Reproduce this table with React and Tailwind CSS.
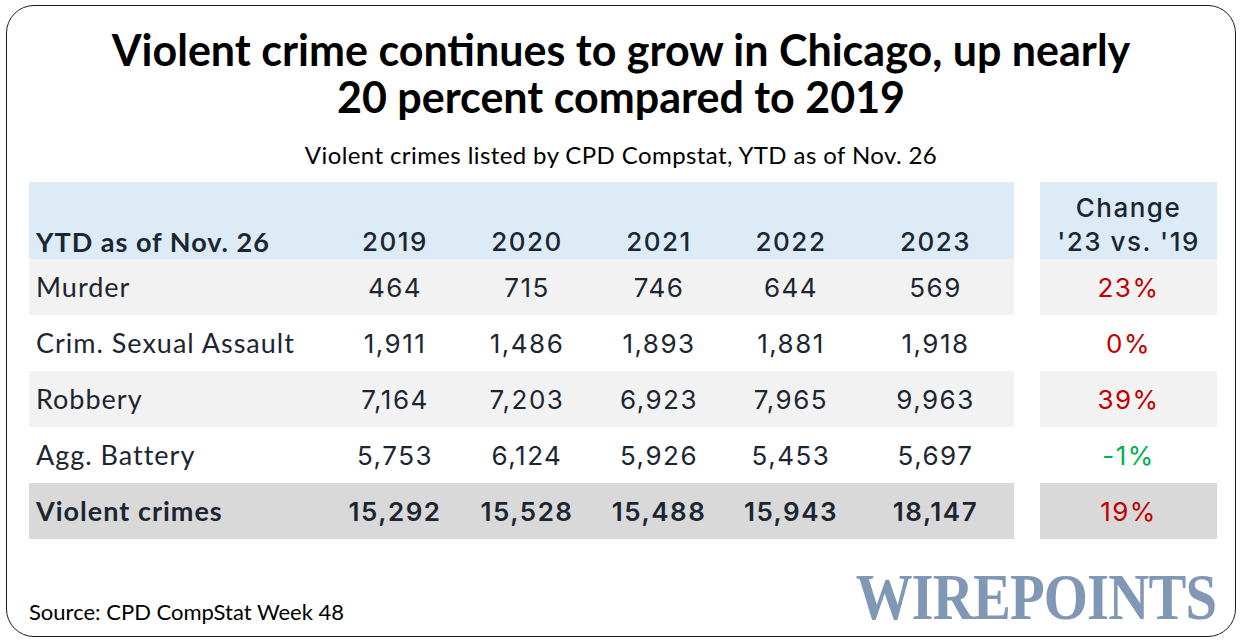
import React from 'react';

const YEARS = ['2019', '2020', '2021', '2022', '2023'];

const ROWS = [
  { label: 'Murder', values: ['464', '715', '746', '644', '569'], change: '23%', up: true, bg: 'bg-[#f2f2f2]' },
  { label: 'Crim. Sexual Assault', values: ['1,911', '1,486', '1,893', '1,881', '1,918'], change: '0%', up: true, bg: 'bg-white' },
  { label: 'Robbery', values: ['7,164', '7,203', '6,923', '7,965', '9,963'], change: '39%', up: true, bg: 'bg-[#f2f2f2]' },
  { label: 'Agg. Battery', values: ['5,753', '6,124', '5,926', '5,453', '5,697'], change: '-1%', up: false, bg: 'bg-white' },
];

const TOTAL = { label: 'Violent crimes', values: ['15,292', '15,528', '15,488', '15,943', '18,147'], change: '19%' };

const grid = 'grid grid-cols-[300px_132px_132px_132px_132px_157px]';
const num = "font-['Inter',sans-serif] text-center tracking-[1.5px]";
const label = 'pl-[7px] text-[27px] tracking-[1px]';

export default function App() {
  return (
    <div className="w-[1241px] h-[641px] bg-white pt-[5px] pl-[6px] font-['Lato',sans-serif] text-[#1b2631]">
      <div className="w-[1230px] h-[632px] border border-[#1a1a1a] rounded-[28px] flex flex-col pl-[22px] pr-[17px]">
        {/* Title */}
        <h1 className="mt-[20px] text-center text-[43px] leading-[47px] font-bold text-black -ml-[5px]">
          Violent crime continues to grow in Chicago, up nearly<br />20 percent compared to 2019
        </h1>
        <p className="mt-[21px] text-center text-[24px] leading-[28px] tracking-[0.4px] text-black -ml-[5px]">
          Violent crimes listed by CPD Compstat, YTD as of Nov. 26
        </p>

        {/* Tables */}
        <div className="mt-[13px] flex gap-[26px]">
          <div className="w-[985px]">
            <div className={`${grid} h-[77px] bg-[#ddebf7] items-end pb-[1px] text-[26px] leading-[32px]`}>
              <div className={`${label} font-bold`}>YTD as of Nov. 26</div>
              {YEARS.map(y => (
                <div key={y} className={`${num} font-medium`}>{y}</div>
              ))}
            </div>
            {ROWS.map(r => (
              <div key={r.label} className={`${grid} h-[56px] items-center text-[26px] ${r.bg}`}>
                <div className={label}>{r.label}</div>
                {r.values.map((v, i) => (
                  <div key={i} className={num}>{v}</div>
                ))}
              </div>
            ))}
            <div className={`${grid} h-[56px] items-center text-[26px] bg-[#d9d9d9]`}>
              <div className={`${label} font-bold`}>{TOTAL.label}</div>
              {TOTAL.values.map((v, i) => (
                <div key={i} className={`${num} font-semibold`}>{v}</div>
              ))}
            </div>
          </div>

          <div className="w-[177px]">
            <div className={`h-[77px] bg-[#ddebf7] flex flex-col justify-end pb-[1px] text-center text-[26px] leading-[37px] font-medium ${num}`}>
              <div>Change</div>
              <div className="leading-[32px]">'23 vs. '19</div>
            </div>
            {ROWS.map(r => (
              <div key={r.label} className={`h-[56px] flex items-center justify-center text-[26px] ${num} ${r.bg} ${r.up ? 'text-[#c00000]' : 'text-[#00b050]'}`}>
                {r.change}
              </div>
            ))}
            <div className={`h-[56px] flex items-center justify-center text-[26px] ${num} bg-[#d9d9d9] text-[#c00000]`}>
              {TOTAL.change}
            </div>
          </div>
        </div>

        {/* Footer */}
        <div className="mt-auto mb-[14px] flex items-end justify-between">
          <div className="text-[22px] leading-[24px] text-black mb-[-2px]">Source: CPD CompStat Week 48</div>
          <div className="font-['Liberation_Serif',serif] font-bold text-[66px] leading-[50px] tracking-[-1px] text-[#8097b6] scale-x-[0.86] origin-right mr-[2px]">
            WIREPOINTS
          </div>
        </div>
      </div>
    </div>
  );
}
